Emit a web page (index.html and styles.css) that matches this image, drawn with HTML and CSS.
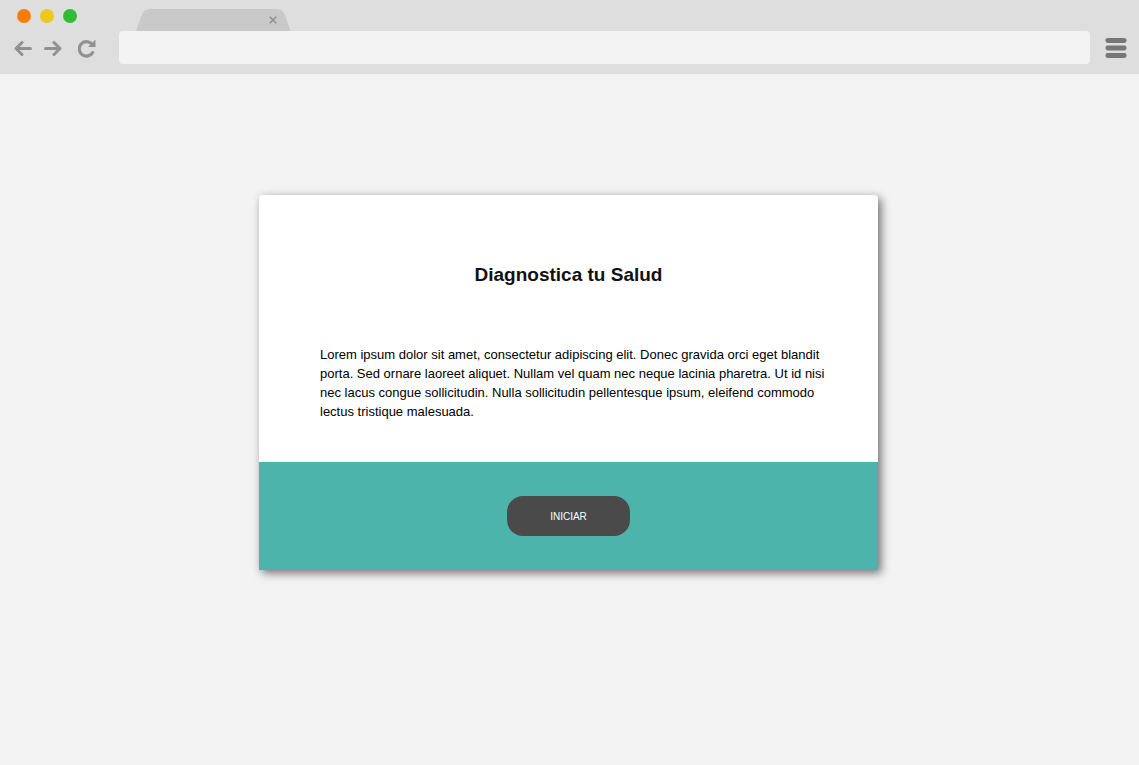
FILE: index.html
```html
<!DOCTYPE html>
<html lang="es">
<head>
<meta charset="utf-8">
<title>Diagnostica tu Salud</title>
<link rel="stylesheet" href="styles.css">
</head>
<body>
<header class="browser">
  <div class="tabs">
    <svg class="lights" width="64" height="18" viewBox="0 0 64 18" aria-hidden="true">
      <circle cx="9" cy="9" r="7" fill="#fb7c00"/>
      <circle cx="32" cy="9" r="7" fill="#edc81e"/>
      <circle cx="55" cy="9" r="7" fill="#32bc36"/>
    </svg>
    <div class="tab">
      <svg class="tab-shape" width="156" height="22" viewBox="0 0 156 22" aria-hidden="true">
        <path d="M1 22 6 7.500Q8.500 0 15 0H141Q147.500 0 150 6L155.500 22Z" fill="#c9c9c9"/>
      </svg>
      <button class="tab-close" type="button" aria-label="Cerrar">
        <svg width="8" height="8" viewBox="0 0 8 8"><path d="M.7 .7 7.300 7.300M7.300 .7 .7 7.300" stroke="#8e8e8e" stroke-width="1.500"/></svg>
      </button>
    </div>
  </div>
  <div class="toolbar">
    <nav class="nav">
      <button class="tool" type="button" aria-label="Atrás">
        <svg width="18" height="18" viewBox="0 0 18 18"><path d="M8 3.500 2 9.500l6 6M2.500 9.500H16.500" fill="none" stroke="#919191" stroke-width="3" stroke-linecap="round" stroke-linejoin="round"/></svg>
      </button>
      <button class="tool" type="button" aria-label="Adelante">
        <svg width="18" height="18" viewBox="0 0 18 18"><path d="M10 3.500l6 6-6 6M15.500 9.500H1.500" fill="none" stroke="#919191" stroke-width="3" stroke-linecap="round" stroke-linejoin="round"/></svg>
      </button>
      <button class="tool reload" type="button" aria-label="Recargar">
        <svg width="18" height="20" viewBox="0 0 18 20"><path d="M14.600 14.600A7.200 7.200 0 1 1 13.500 5.700" fill="none" stroke="#919191" stroke-width="3.200" stroke-linecap="round"/><path d="M17.500 1.500V9H10Z" fill="#919191"/></svg>
      </button>
    </nav>
    <input class="address" type="text" aria-label="Dirección">
    <button class="tool menu" type="button" aria-label="Menú">
      <svg width="22" height="20" viewBox="0 0 22 20"><path d="M2.800 2.500H19.200M2.800 10H19.200M2.800 17.500H19.200" stroke="#777" stroke-width="4.800" stroke-linecap="round"/></svg>
    </button>
  </div>
</header>
<main class="page">
  <section class="card">
    <div class="card-body">
      <h1 class="title">Diagnostica tu Salud</h1>
      <p class="text">Lorem ipsum dolor sit amet, consectetur adipiscing elit. Donec gravida orci eget blandit porta. Sed ornare laoreet aliquet. Nullam vel quam nec neque lacinia pharetra. Ut id nisi nec lacus congue sollicitudin. Nulla sollicitudin pellentesque ipsum, eleifend commodo lectus tristique malesuada.</p>
    </div>
    <div class="card-footer">
      <button class="start" type="button">INICIAR</button>
    </div>
  </section>
</main>
</body>
</html>
```
FILE: styles.css
```css
* {
  box-sizing: border-box;
}

body {
  margin: 0;
  min-height: 100vh;
  background: #f3f3f3;
  color: #111;
  font-family: "Liberation Sans", Arial, sans-serif;
}

button {
  padding: 0;
  border: 0;
  background: none;
  font-family: inherit;
}

svg {
  display: block;
}

.browser {
  padding-bottom: 10px;
  background: #dedede;
}

.tabs {
  display: flex;
  align-items: flex-end;
  gap: 56px;
  height: 31px;
  padding-left: 15px;
}

.lights {
  margin-bottom: 6px;
}

.tab {
  position: relative;
}

.tab-close {
  position: absolute;
  top: 7px;
  right: 14px;
}

.toolbar {
  display: flex;
  align-items: center;
  padding: 0 12px 0 14px;
}

.nav {
  display: flex;
  align-items: center;
  gap: 12px;
  margin-right: 23px;
}

.reload {
  margin-left: 4px;
}

.address {
  flex: 1;
  min-width: 0;
  height: 33px;
  padding: 0 12px;
  border: 0;
  border-radius: 4px;
  background: #f3f3f3;
  font-size: 14px;
}

.menu {
  margin-left: 15px;
}

.page {
  padding: 121px 26px 40px 24px;
}

.card {
  max-width: 619px;
  margin: 0 auto;
  overflow: hidden;
  border-radius: 4px 4px 0 0;
  background: #fff;
  box-shadow: 3px 3px 10px rgba(0, 0, 0, 0.55);
}

.card-body {
  padding: 68px 0 41px;
}

.title {
  margin: 0 0 58px;
  font-size: 19px;
  line-height: 24px;
  text-align: center;
}

.text {
  margin: 0;
  padding: 0 46px 0 61px;
  color: #000;
  font-size: 13px;
  line-height: 19px;
}

.card-footer {
  display: flex;
  justify-content: center;
  padding: 34px;
  background: #4db4ac;
}

.start {
  width: 123px;
  height: 40px;
  border-radius: 16px;
  background: #4a4a4a;
  color: #fff;
  font-size: 10px;
}
```
